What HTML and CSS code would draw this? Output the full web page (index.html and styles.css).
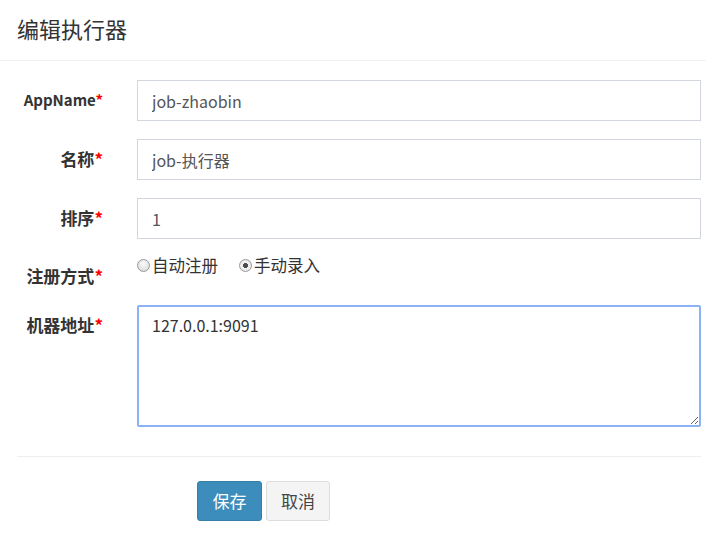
FILE: index.html
```html
<!DOCTYPE html>
<html lang="zh-CN">
<head>
<meta charset="utf-8">
<title>编辑执行器</title>
<link rel="stylesheet" href="styles.css">
</head>
<body>
<div class="modal">
  <div class="modal-header">
    <h4 class="modal-title">编辑执行器</h4>
  </div>
  <form class="modal-body">
    <div class="form-group">
      <label class="control-label control-label-latin">AppName<span class="req">*</span></label>
      <input class="form-control" type="text" value="job-zhaobin">
    </div>
    <div class="form-group">
      <label class="control-label">名称<span class="req">*</span></label>
      <input class="form-control" type="text" value="job-执行器">
    </div>
    <div class="form-group">
      <label class="control-label">排序<span class="req">*</span></label>
      <input class="form-control" type="text" value="1">
    </div>
    <div class="form-group form-group-radio">
      <label class="control-label">注册方式<span class="req">*</span></label>
      <div class="radio-group">
        <label class="radio-inline"><input type="radio" name="addressType" value="0">自动注册</label>
        <label class="radio-inline"><input type="radio" name="addressType" value="1" checked>手动录入</label>
      </div>
    </div>
    <div class="form-group">
      <label class="control-label">机器地址<span class="req">*</span></label>
      <textarea class="form-control textarea">127.0.0.1:9091</textarea>
    </div>
    <div class="form-footer">
      <button type="button" class="btn btn-primary">保存</button>
      <button type="button" class="btn btn-default">取消</button>
    </div>
  </form>
</div>
</body>
</html>
```

FILE: styles.css
```css
* { box-sizing: border-box; }

html, body {
  margin: 0;
  padding: 0;
  background: #fff;
}

body {
  font-family: "Noto Sans CJK SC", "Noto Sans", sans-serif;
  color: #333;
}

.modal {
  width: 706px;
}

.modal-header {
  height: 61px;
  padding: 0 17px 4px;
  display: flex;
  align-items: center;
  border-bottom: 1px solid #f0f0f0;
}

.modal-title {
  margin: 0;
  font-size: 22px;
  font-weight: normal;
  line-height: 1.2;
  color: #333;
}

.modal-body {
  padding: 19px 5px 0 0;
  margin: 0;
}

.form-group {
  display: grid;
  grid-template-columns: 103px 1fr;
  column-gap: 34px;
  margin-bottom: 18px;
}

.control-label {
  text-align: right;
  font-size: 17px;
  font-weight: bold;
  line-height: 20px;
  padding-top: 10px;
  color: #333;
  white-space: nowrap;
}

.control-label-latin {
  font-size: 15px;
}

.form-group-radio .control-label {
  padding-top: 9px;
}

.req {
  color: #f00;
}

.form-control {
  display: block;
  width: 100%;
  height: 41px;
  margin: 0;
  padding: 6px 14px;
  font-family: "Noto Sans CJK SC", "Noto Sans", sans-serif;
  font-size: 16px;
  line-height: 20px;
  color: #555;
  background: #fff;
  border: 1px solid #d2d6de;
  border-radius: 0;
  outline: none;
}

.textarea {
  height: 122px;
  padding: 8px 13px;
  color: #333;
  border: 2px solid #8ab2f5;
  border-radius: 2px;
  resize: vertical;
}

.radio-group {
  height: 30px;
  display: flex;
  align-items: flex-start;
}

.radio-inline {
  display: flex;
  align-items: center;
  font-size: 16.5px;
  line-height: 16px;
  color: #333;
  margin-right: 21px;
}

.radio-inline input {
  -webkit-appearance: none;
  appearance: none;
  width: 13px;
  height: 13px;
  margin: 0 2px 0 0;
  border: 1px solid #9a9a9a;
  border-radius: 50%;
  background: radial-gradient(circle at 50% 35%, #fafafa 0, #e6e6e6 55%, #d0d0d0 100%);
}

.radio-inline input:checked {
  background: radial-gradient(circle, #4a4a4a 0, #4a4a4a 2.2px, #f2f2f2 2.8px, #e0e0e0 100%);
}

.form-footer {
  margin: 29px 0 0 17px;
  border-top: 1px solid #eee;
  padding: 24px 0 0 180px;
  display: flex;
  gap: 4px;
}

.btn {
  height: 40px;
  padding: 0 14px;
  font-family: "Noto Sans CJK SC", sans-serif;
  font-size: 17px;
  line-height: 38px;
  border-radius: 3px;
  cursor: pointer;
}

.btn-primary {
  width: 65px;
  color: #fff;
  background: #3c8dbc;
  border: 1px solid #367fa9;
}

.btn-default {
  width: 64px;
  color: #444;
  background: #f4f4f4;
  border: 1px solid #ddd;
}
```
